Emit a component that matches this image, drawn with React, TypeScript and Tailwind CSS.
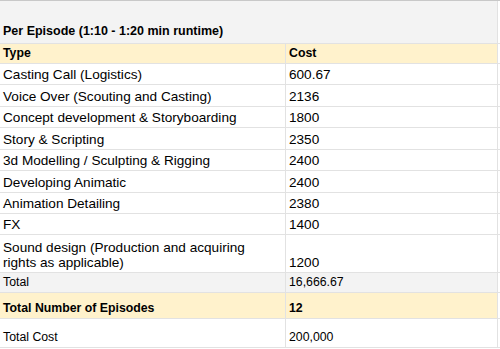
import React from "react";

type Row = {
  a: React.ReactNode;
  b: React.ReactNode;
  h: number;
  bg?: string;
  bold?: boolean;
  small?: boolean;
};

const rows: Row[] = [
  { a: "Type", b: "Cost", h: 20, bg: "bg-[#fff2cc]", bold: true },
  { a: "Casting Call (Logistics)", b: "600.67", h: 21 },
  { a: "Voice Over (Scouting and Casting)", b: "2136", h: 22 },
  { a: "Concept development & Storyboarding", b: "1800", h: 21 },
  { a: "Story & Scripting", b: "2350", h: 22 },
  { a: "3d Modelling / Sculpting & Rigging", b: "2400", h: 21 },
  { a: "Developing Animatic", b: "2400", h: 22 },
  { a: "Animation Detailing", b: "2380", h: 21 },
  { a: "FX", b: "1400", h: 21 },
  {
    a: (
      <>
        Sound design (Production and acquiring
        <br />
        rights as applicable)
      </>
    ),
    b: "1200",
    h: 38,
  },
  { a: "Total", b: "16,666.67", h: 20, bg: "bg-[#f3f3f3]", small: true },
  { a: "Total Number of Episodes", b: "12", h: 26, bg: "bg-[#fff2cc]", bold: true },
  { a: "Total Cost", b: "200,000", h: 29, small: true },
];

function Cell({
  children,
  w,
  bg,
  bold,
  small,
}: {
  children?: React.ReactNode;
  w: string;
  bg?: string;
  bold?: boolean;
  small?: boolean;
}) {
  return (
    <div
      className={`${w} ${bg ?? "bg-white"} border-r border-b border-[#e2e2e2] flex items-end px-[3px] pb-[2px] overflow-hidden whitespace-nowrap ${
        bold ? "font-bold text-[12.3px]" : small ? "text-[12.3px]" : "text-[13.6px]"
      } leading-[15px] text-black`}
    >
      {children}
    </div>
  );
}

export default function App() {
  return (
    <div
      className="w-[500px] h-[349px] bg-white overflow-hidden"
      style={{ fontFamily: '"Liberation Sans", Arial, sans-serif' }}
    >
      <div className="h-[1px] bg-[#c8c8c8] w-full" />
      <div className="flex h-[43px]">
        <div className="w-[498px] bg-[#f3f3f3] border-r border-b border-[#e2e2e2] flex items-end px-[3px] pb-[4px] font-bold text-[12.5px] leading-[15px] text-black">
          Per Episode (1:10 - 1:20 min runtime)
        </div>
        <div className="w-[2px] border-b border-[#e2e2e2]" />
      </div>
      {rows.map((r, i) => (
        <div key={i} className="flex" style={{ height: r.h }}>
          <Cell w="w-[286px]" bg={r.bg} bold={r.bold} small={r.small}>
            {r.a}
          </Cell>
          <Cell w="w-[212px]" bg={r.bg} bold={r.bold} small={r.small}>
            {r.b}
          </Cell>
          <div className="w-[2px] border-b border-[#e2e2e2]" />
        </div>
      ))}
    </div>
  );
}
